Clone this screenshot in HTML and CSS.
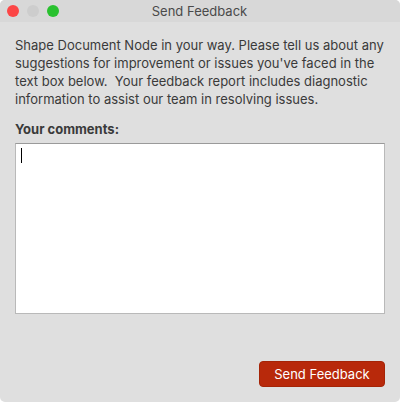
FILE: index.html
```html
<!DOCTYPE html>
<html>
<head>
<meta charset="utf-8">
<link rel="stylesheet" href="styles.css">
</head>
<body>
<div class="window">
  <div class="titlebar">
    <div class="lights">
      <span class="light red"></span>
      <span class="light gray"></span>
      <span class="light green"></span>
    </div>
    <div class="title">Send Feedback</div>
  </div>
  <div class="content">
    <p class="intro">Shape Document Node in your way. Please tell us about any suggestions for improvement or issues you've faced in the text box below.&nbsp; Your feedback report includes diagnostic information to assist our team in resolving issues.</p>
    <div class="label">Your comments:</div>
    <div class="textbox"><span class="caret"></span></div>
    <div class="actions">
      <button class="send">Send Feedback</button>
    </div>
  </div>
</div>
</body>
</html>
```

FILE: styles.css
```css
html, body {
  margin: 0;
  padding: 0;
  background: #ffffff;
}
body {
  width: 400px;
  height: 402px;
  font-family: Inter, "Liberation Sans", sans-serif;
  font-size: 13px;
  color: #333333;
}
.window {
  width: 400px;
  height: 402px;
  border-radius: 5px;
  overflow: hidden;
  background: #dfdfdf;
  display: flex;
  flex-direction: column;
}
.titlebar {
  height: 22px;
  background: #d8d8d8;
  display: flex;
  align-items: center;
  flex-shrink: 0;
}
.lights {
  display: flex;
  gap: 8px;
  padding-left: 7px;
}
.light {
  width: 12px;
  height: 12px;
  border-radius: 50%;
  display: block;
}
.red { background: #fc4646; }
.gray { background: #cdcdcd; }
.green { background: #29c12f; }
.title {
  flex: 1;
  text-align: center;
  margin-right: 60px;
  color: #4a4a4a;
  font-size: 13px;
}
.content {
  flex: 1;
  padding: 14px 15px 15px 15px;
  display: flex;
  flex-direction: column;
}
.intro {
  margin: 0;
  line-height: 18px;
  color: #3a3a3a;
}
.label {
  margin-top: 13px;
  font-weight: bold;
  color: #3a3a3a;
  line-height: 16px;
}
.textbox {
  margin-top: 6px;
  height: 161px;
  background: #ffffff;
  border: 1px solid #b9b9b9;
  border-top-color: #9a9a9a;
  padding: 4px 5px;
}
.caret {
  display: block;
  width: 1px;
  height: 15px;
  background: #000;
}
.actions {
  margin-top: auto;
  display: flex;
  justify-content: flex-end;
}
.send {
  width: 126px;
  height: 26px;
  border: 1px solid #a52407;
  border-radius: 4px;
  background: #b8290b;
  color: #ffffff;
  font-family: Inter, "Liberation Sans", sans-serif;
  font-size: 13px;
  padding: 0;
}
```
